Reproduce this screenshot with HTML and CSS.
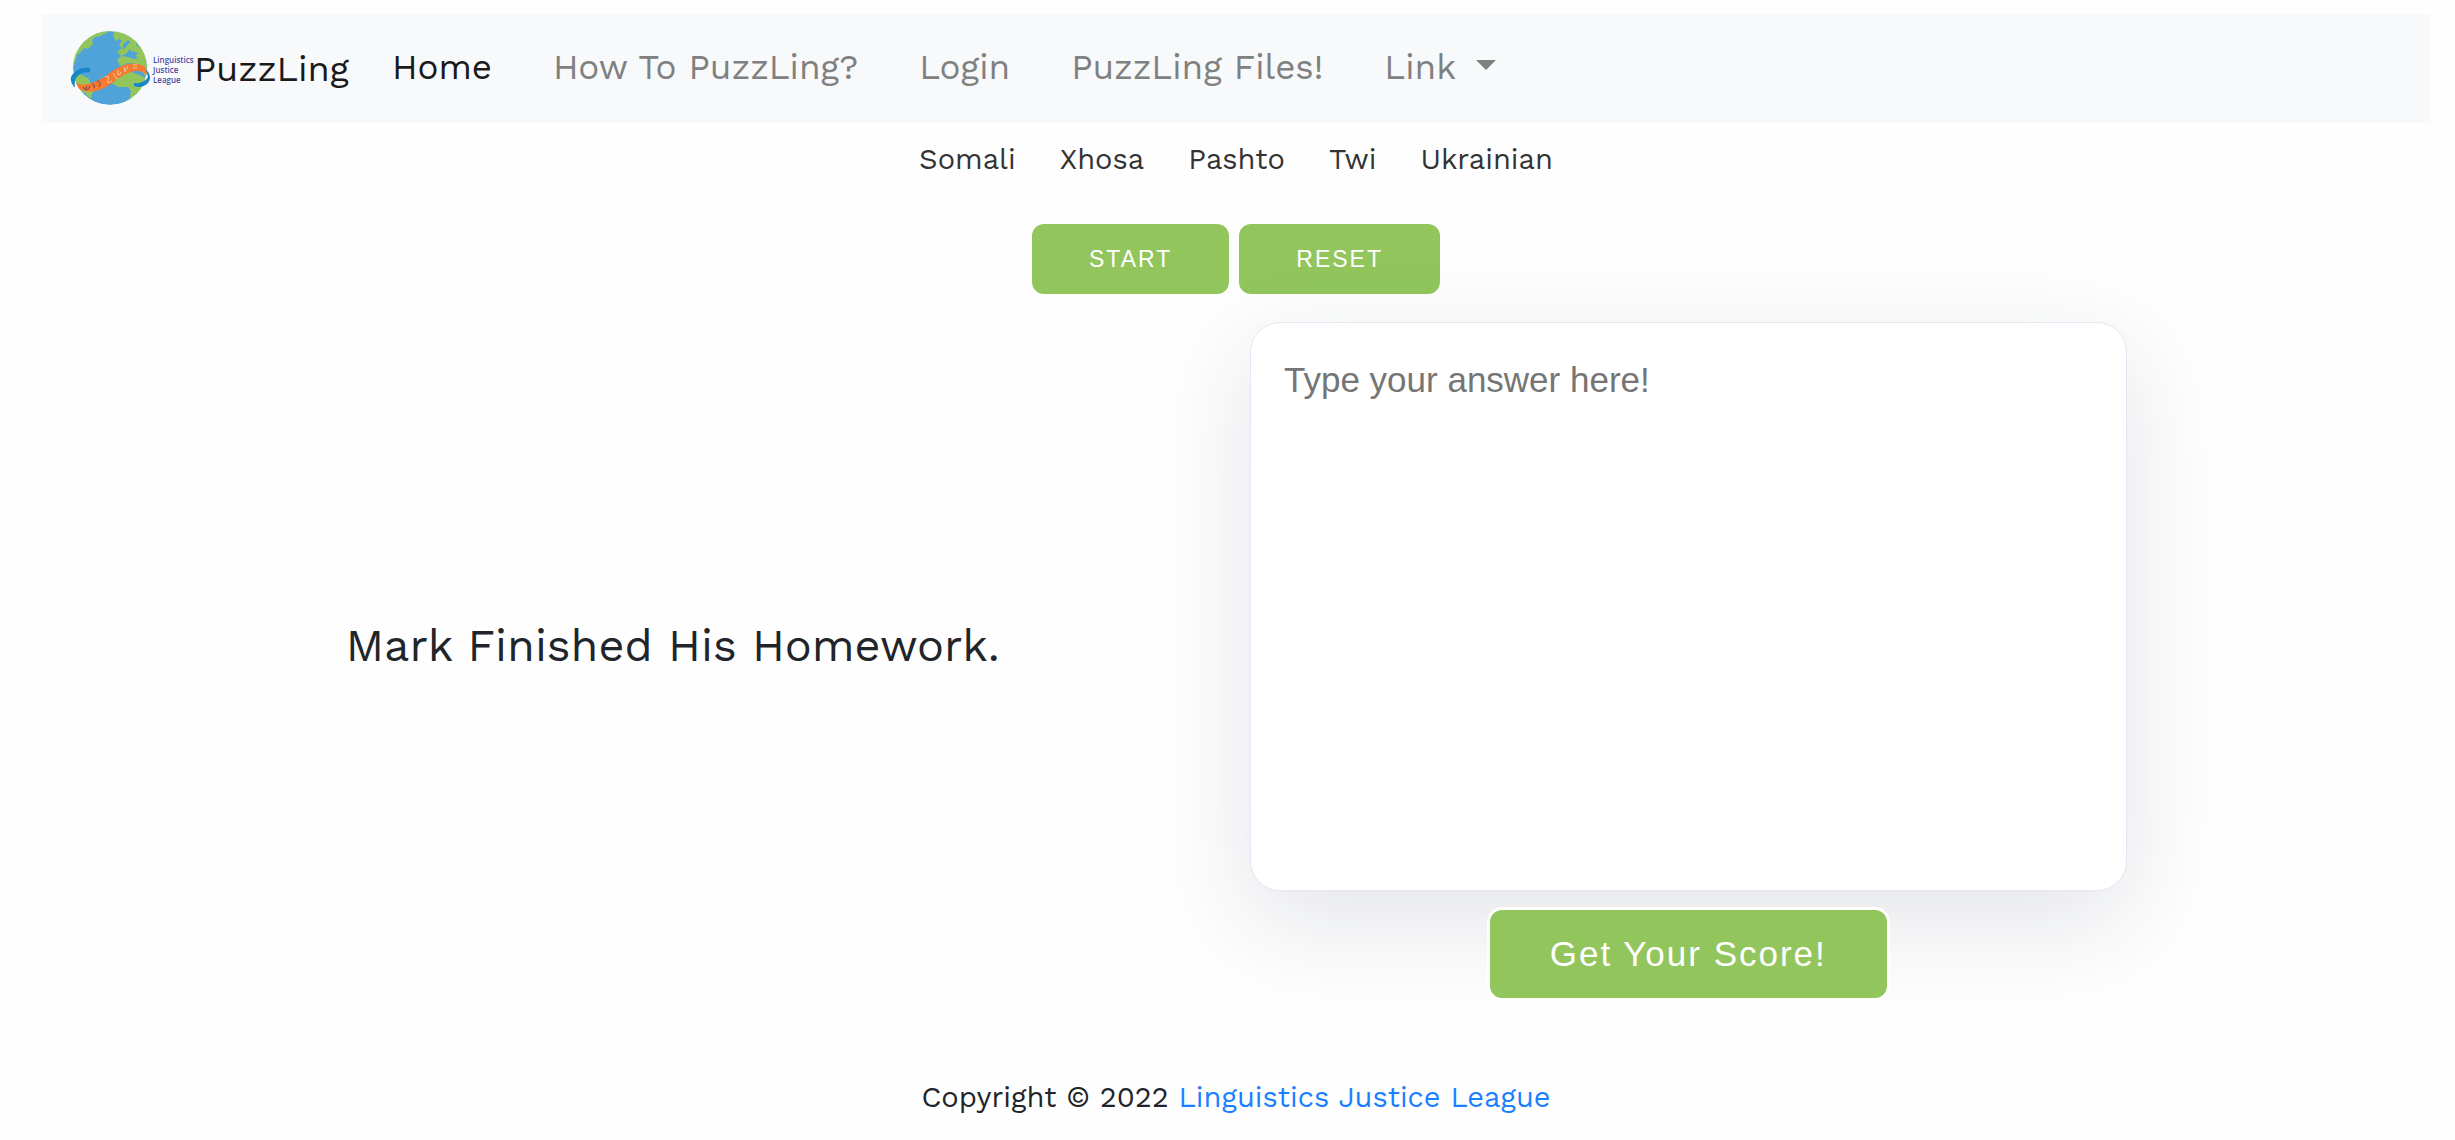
FILE: index.html
```html
<!DOCTYPE html>
<html lang="en">
<head>
<meta charset="utf-8">
<title>PuzzLing</title>
<link rel="stylesheet" href="styles.css">
</head>
<body>
<nav class="navbar">
  <a class="brand" href="#">
    <svg class="logo" viewBox="0 1 124 76" role="img" aria-label="Linguistics Justice League">
      <defs><clipPath id="globe"><circle cx="40" cy="38" r="37"/></clipPath></defs>
      <g clip-path="url(#globe)">
        <circle cx="40" cy="38" r="37" fill="#4fa3d9"/>
        <g fill="#92c65d">
          <path d="M2 34 5 24 12 13 22 5 32 1H41L34 4 31 6 25 7 22 10 23 14 18 19 14 18 10 23 7 25 5 33Z"/>
          <path d="M45 0 60 3 73 16 78 33 77 48 70 39 66 34 58 33 50 36 47 30 51 26 58 27 64 29 68 28 63 24 60 19 56 24 51 26 47 22 52 18 49 15 52 11 49 9 46 11 43 6Z"/>
          <path d="M42 54 48 45 58 41 70 45 77 49 72 62 64 65 59 71 61 61 58 57 49 57Z"/>
          <path d="M1 42 12 45 19 49 22 57 27 60 22 63 21 69 9 58Z"/>
        </g>
        <path d="M53 14 58 10 60 12 57 16 53 20ZM59 24l5-3 4 2-3 3ZM66 13l3 3-2 1Z" fill="#4fa3d9"/>
      </g>
      <path d="M4 57Q-3 48 5 42 11 37 20 38V42Q9 42 6 48 4 53 5 57Z" fill="#1787c9"/>
      <path d="M6 53C16 57 28 52 41 42 52 34 65 30 75 37L79 46C68 36 56 43 46 50 34 60 22 65 9 59Z" fill="#f47b30"/>
      <path d="M76 39Q83 47 78 53 72 59 64 56V53Q74 54 78 47Z" fill="#1787c9"/>
      <g fill="none" stroke-width="1">
        <path d="M13 57q2 4 4-1M15 60q4 0 5-4M22 54q4 1 2 4M27 51q5 0 2 6" stroke="#75405b"/>
        <path d="M35 47q5-2 3 3t4 1M43 43l4 6M48 40v5q3 0 3-3M54 37l1 5 3-6M63 35h4M63 38h4" stroke="#f9c5a4"/>
      </g>
      <g class="logo-text">
        <text x="83" y="33">Linguistics</text>
        <text x="83" y="43">Justice</text>
        <text x="83" y="53">League</text>
      </g>
    </svg>
    <span>PuzzLing</span>
  </a>
  <ul class="menu">
    <li><a class="active" href="#">Home</a></li>
    <li><a href="#">How To PuzzLing?</a></li>
    <li><a href="#">Login</a></li>
    <li><a href="#">PuzzLing Files!</a></li>
    <li><a class="dropdown" href="#">Link</a></li>
  </ul>
</nav>
<ul class="languages">
  <li><a href="#">Somali</a></li>
  <li><a href="#">Xhosa</a></li>
  <li><a href="#">Pashto</a></li>
  <li><a href="#">Twi</a></li>
  <li><a href="#">Ukrainian</a></li>
</ul>
<div class="controls">
  <button class="button" type="button">START</button>
  <button class="button" type="button">RESET</button>
</div>
<main class="exercise">
  <p class="sentence" id="sentence">Mark Finished His Homework.</p>
  <form class="answer">
    <textarea class="answer-box" aria-labelledby="sentence" placeholder="Type your answer here!"></textarea>
    <button class="button button-large" type="button">Get Your Score!</button>
  </form>
</main>
<footer class="footer">Copyright © 2022 <a href="#">Linguistics Justice League</a></footer>
</body>
</html>
```
FILE: styles.css
```css
* { box-sizing: border-box; }

body {
  margin: 0;
  padding: 14px 25px 0 42px;
  background: #fefefe;
  color: #212529;
  font-family: "Work Sans", "Open Sans", sans-serif;
}

a { color: inherit; text-decoration: none; }
ul { margin: 0; padding: 0; list-style: none; }

.navbar {
  display: flex;
  align-items: center;
  height: 109px;
  padding: 0 28px;
  background: #f8f9fa;
}

.brand {
  display: flex;
  align-items: center;
  margin-right: 43px;
  color: #1a1a1a;
  font-size: 36px;
}

.logo { width: 124px; height: 76px; }

.logo-text {
  fill: #4b4ba3;
  font-family: "Open Sans", sans-serif;
  font-size: 8px;
  font-weight: 600;
}

.menu {
  display: flex;
  gap: 61px;
  padding-bottom: 4px;
  color: #7f8080;
  font-size: 35px;
}

.menu .active { color: #1a1a1a; }

.dropdown { display: flex; align-items: center; gap: 20px; }

.dropdown::after {
  content: "";
  margin-bottom: 4px;
  border: 10px solid transparent;
  border-top-color: currentColor;
  border-bottom: 0;
}

.languages {
  display: flex;
  justify-content: center;
  gap: 44px;
  margin-top: 16px;
  color: #333;
  font-size: 29px;
  line-height: 40px;
}

.controls {
  display: flex;
  justify-content: center;
  gap: 10px;
  margin-top: 45px;
}

.button {
  height: 70px;
  padding: 0 57px;
  border: 0;
  border-radius: 12px;
  background: #92c65d;
  color: #fff;
  font-family: "Liberation Sans", Arial, sans-serif;
  font-size: 23px;
  letter-spacing: 2px;
}

.button-large {
  height: 94px;
  padding: 0 60px;
  border: 3px solid #fff;
  border-radius: 15px;
  font-size: 35px;
}

.exercise {
  display: grid;
  grid-template-columns: 1fr 1fr;
  align-items: center;
  margin-top: 28px;
  padding: 0 234px 0 123px;
}

.sentence {
  margin: 0 0 31px;
  font-size: 45px;
  line-height: 60px;
  text-align: center;
}

.answer {
  display: flex;
  flex-direction: column;
  align-items: center;
  gap: 16px;
}

.answer-box {
  width: calc(100% - 139px);
  height: 569px;
  padding: 37px 33px;
  border: 1px solid #e5e7f5;
  border-radius: 30px;
  background: #fff;
  box-shadow: 0 30px 100px rgba(35, 38, 70, 0.12);
  font-family: "Liberation Sans", Arial, sans-serif;
  font-size: 35px;
  resize: none;
}

.answer-box::placeholder { color: #757575; }

.footer {
  margin-top: 75px;
  font-size: 29px;
  line-height: 42px;
  text-align: center;
}

.footer a { color: #1a80ff; }
```
